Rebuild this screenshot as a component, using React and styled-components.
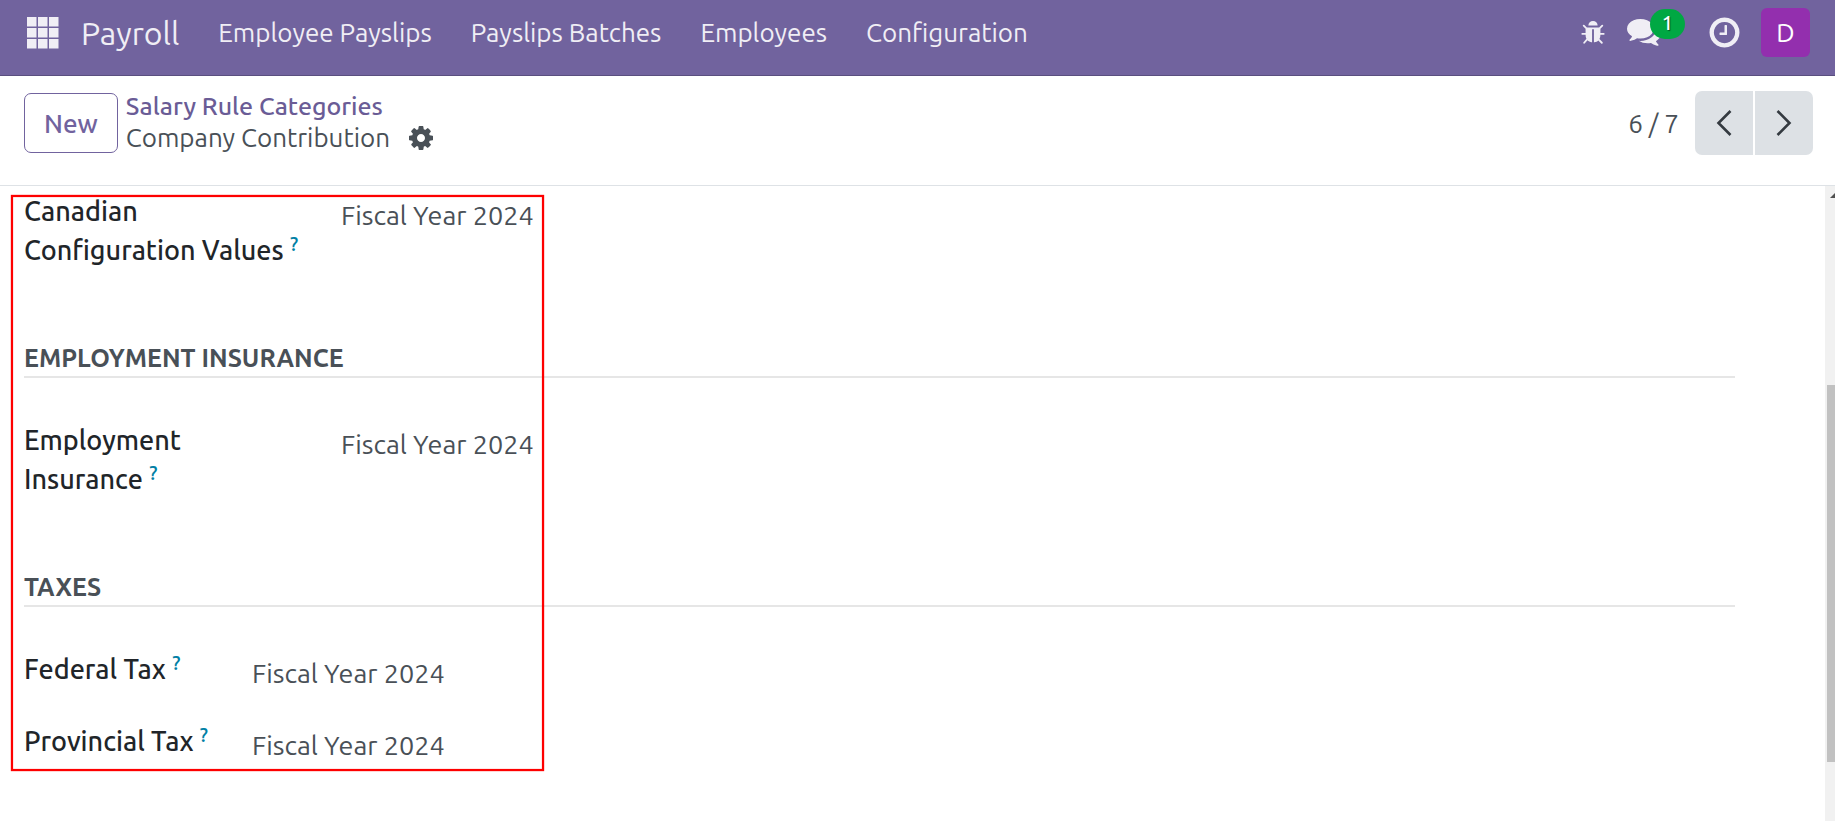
import React from 'react';
import styled, { createGlobalStyle } from 'styled-components';

const GlobalStyle = createGlobalStyle`
  *, *::before, *::after {
    box-sizing: border-box;
  }
  body {
    margin: 0;
    background: #fff;
    color: #495057;
    font-family: Ubuntu, 'Noto Sans', sans-serif;
    font-size: 26px;
  }
  button {
    font: inherit;
    cursor: pointer;
  }
`;

const Page = styled.div`
  display: flex;
  flex-direction: column;
  min-height: 100vh;
`;

const Navbar = styled.header`
  display: flex;
  align-items: center;
  justify-content: space-between;
  height: 76px;
  padding: 0 25px 10px 27px;
  background: #71639e;
  border-bottom: 1px solid #5a4f7f;
  color: #f0eef5;
`;

const NavMenu = styled.nav`
  display: flex;
  align-items: center;
  gap: 39px;
`;

const AppsButton = styled.button`
  display: flex;
  margin-right: -17px;
  padding: 0;
  border: 0;
  background: none;
  color: inherit;
`;

const Brand = styled.a`
  color: inherit;
  font-size: 32px;
  line-height: 40px;
  text-decoration: none;
`;

const NavLink = styled.a`
  color: inherit;
  line-height: 40px;
  text-decoration: none;
`;

const Systray = styled.div`
  display: flex;
  align-items: center;
`;

const SystrayButton = styled.button`
  position: relative;
  display: flex;
  margin-right: ${({ $gap }) => $gap}px;
  padding: 0;
  border: 0;
  background: none;
  color: inherit;
`;

const Badge = styled.span`
  position: absolute;
  top: -7px;
  left: 23px;
  width: 35px;
  padding-bottom: 2px;
  border-radius: 15px;
  background: #00a843;
  color: #fff;
  font-size: 20px;
  font-weight: 500;
  line-height: 28px;
  text-align: center;
  text-shadow: 1px 1px 1px rgba(0, 0, 0, 0.5);
`;

const Avatar = styled.button`
  width: 49px;
  height: 49px;
  padding: 0;
  border: 0;
  border-radius: 6px;
  background: #932fae;
  color: #fff;
`;

const ControlPanel = styled.div`
  display: flex;
  align-items: center;
  justify-content: space-between;
  padding: 15px 22px 30px 24px;
  border-bottom: 1px solid #dee2e6;
`;

const PanelSide = styled.div`
  display: flex;
  align-items: center;
  gap: ${({ $gap }) => $gap}px;
`;

const NewButton = styled.button`
  height: 60px;
  padding: 0 19px;
  border: 1px solid #71639e;
  border-radius: 7px;
  background: #fff;
  color: #71639e;
  font-weight: 500;
`;

const Breadcrumb = styled.div`
  display: flex;
  flex-direction: column;
`;

const ParentLink = styled.a`
  color: #6a5c96;
  font-size: 25px;
  font-weight: 500;
  line-height: 30px;
  text-decoration: none;
`;

const CurrentPage = styled.div`
  display: flex;
  align-items: center;
  gap: 19px;
  line-height: 34px;
`;

const CogButton = styled.button`
  display: flex;
  padding: 0;
  border: 0;
  background: none;
  color: #495057;
`;

const PagerButtons = styled.div`
  display: flex;
  gap: 2px;
`;

const PagerButton = styled.button`
  display: flex;
  align-items: center;
  justify-content: center;
  width: 58px;
  height: 64px;
  padding: 0;
  border: 0;
  border-radius: ${({ $side }) => ($side === 'left' ? '7px 0 0 7px' : '0 7px 7px 0')};
  background: #dde1e5;
  color: #343a40;
`;

const Content = styled.main`
  display: flex;
  flex: 1;
`;

const Sheet = styled.div`
  position: relative;
  flex: 1;
  padding: 6px 90px 46px 24px;
`;

const Highlight = styled.div`
  position: absolute;
  top: 9px;
  left: 11px;
  width: 533px;
  height: 576px;
  border: 2px solid #fe0000;
  box-shadow: 0 0 1px #fe0000, inset 0 0 1px #fe0000;
  pointer-events: none;
`;

const SectionTitle = styled.h2`
  margin: 70px 0 43px;
  border-bottom: 2px solid #e6e6e6;
  font-size: 25px;
  font-weight: 700;
  line-height: 36px;
  text-transform: uppercase;
`;

const FieldGroup = styled.dl`
  display: grid;
  grid-template-columns: ${({ $labelWidth }) => $labelWidth}px 1fr;
  row-gap: 33px;
  margin: 0;
  font-size: 27px;
  line-height: 39px;
`;

const FieldLabel = styled.dt`
  max-width: 280px;
  color: #212529;
  font-weight: 500;
`;

const Help = styled.sup`
  color: #0180a5;
  font-size: 20px;
  line-height: 20px;
  vertical-align: 9px;
`;

const FieldValue = styled.dd`
  height: 39px;
  margin: 0;
  padding-top: 4px;
`;

const Scrollbar = styled.div`
  display: grid;
  grid-template-rows: 199fr 377fr 59fr;
  width: 10px;
  padding-left: 2px;
  overflow: hidden;
  background: #f1f1f1;
`;

const ScrollThumb = styled.div`
  background: #c1c1c1;
`;

const AppsIcon = () => (
  <svg width="32" height="32" viewBox="0 0 32 32" fill="currentColor" aria-hidden="true">
    {[0, 11, 22].map((y) =>
      [0, 11, 22].map((x) => <rect key={`${x}-${y}`} x={x} y={y} width="9.5" height="9.5" />)
    )}
  </svg>
);

// Font Awesome 4 glyphs, 1792 units per em
const FaIcon = ({ size, rise = 0, d }) => (
  <svg width={size} height={size} viewBox={`0 ${rise} 1792 1792`} fill="currentColor" aria-hidden="true">
    <path d={d} />
  </svg>
);

const icons = {
  bug: 'M1696 960q0 26-19 45t-45 19h-224q0 171-67 290l208 209q19 19 19 45t-19 45q-18 19-45 19t-45-19l-198-197q-5 5-15 13t-42 28.5-65 36.5-82 29-97 13v-896h-128v896q-51 0-101.5-13.5t-87-33-66-39-43.5-32.5l-15-14-183 207q-20 21-48 21-24 0-43-16-19-18-20.5-44.5t15.5-46.5l202-227q-58-114-58-274h-224q-26 0-45-19t-19-45 19-45 45-19h224v-294l-173-173q-19-19-19-45t19-45 45-19 45 19l173 173h844l173-173q19-19 45-19t45 19 19 45-19 45l-173 173v294h224q26 0 45 19t19 45zm-480-576h-640q0-133 93.5-226.5t226.5-93.5 226.5 93.5 93.5 226.5z',
  comments:
    'M1408 768q0 139-94 257t-256.5 186.5-353.5 68.5q-86 0-176-16-124 88-278 128-36 9-86 16h-3q-11 0-20.5-8t-11.5-21q-1-3-1-6.5t.5-6.5 2-6l2.5-5 3.5-5.5 4-5 4.5-5 4-4.5q5-6 23-25t26-29.5 22.5-29 25-38.5 20.5-44q-124-72-195-177t-71-224q0-139 94-257t256.5-186.5 353.5-68.5 353.5 68.5 256.5 186.5 94 257zm384 256q0 120-71 224.5t-195 176.5q10 24 20.5 44t25 38.5 22.5 29 26 29.5 23 25q1 1 4 4.5t4.5 5 4 5 3.5 5.5l2.5 5 2 6 .5 6.5-1 6.5q-3 14-13 22t-22 7q-50-7-86-16-154-40-278-128-90 16-176 16-271 0-472-132 58 4 88 4 161 0 309-45t264-129q125-92 192-212t67-254q0-77-23-152 129 71 204 178t75 230z',
  clock:
    'M1024 544v448q0 14-9 23t-23 9h-320q-14 0-23-9t-9-23v-64q0-14 9-23t23-9h224v-352q0-14 9-23t23-9h64q14 0 23 9t9 23zm416 352q0-148-73-273t-198-198-273-73-273 73-198 198-73 273 73 273 198 198 273 73 273-73 198-198 73-273zm224 0q0 209-103 385.5t-279.5 279.5-385.5 103-385.5-103-279.5-279.5-103-385.5 103-385.5 279.5-279.5 385.5-103 385.5 103 279.5 279.5 103 385.5z',
  cog: 'M1024 896q0-106-75-181t-181-75-181 75-75 181 75 181 181 75 181-75 75-181zm512-109v222q0 12-8 23t-20 13l-185 28q-19 54-39 91 35 50 107 138 10 12 10 25t-9 23q-27 37-99 108t-94 71q-12 0-26-9l-138-108q-44 23-91 38-16 136-29 186-7 28-36 28h-222q-14 0-24.5-8.5t-11.5-21.5l-28-184q-49-16-90-37l-141 107q-10 9-25 9-14 0-25-11-126-114-165-168-7-10-7-23 0-12 8-23 15-21 51-66.5t54-70.5q-27-50-41-99l-183-27q-13-2-21-12.5t-8-23.5v-222q0-12 8-23t19-13l186-28q14-46 39-92-40-57-107-138-10-12-10-24 0-10 9-23 26-36 98.5-107.5t94.5-71.5q13 0 26 10l138 107q44-23 91-38 16-136 29-186 7-28 36-28h222q14 0 24.5 8.5t11.5 21.5l28 184q49 16 90 37l142-107q9-9 24-9 13 0 25 10 129 119 165 170 7 8 7 22 0 12-8 23-15 21-51 66.5t-54 70.5q26 50 41 98l183 28q13 2 21 12.5t8 23.5z',
};

const Chevron = ({ points }) => (
  <svg width="16" height="26" viewBox="0 0 16 26" fill="none" stroke="currentColor" strokeWidth="2.6" aria-hidden="true">
    <polyline points={points} />
  </svg>
);

const ScrollArrow = () => (
  <svg width="8" height="14" viewBox="0 0 8 14" fill="#505050" aria-hidden="true">
    <path d="M3 12 L8 7 V12 Z" />
  </svg>
);

const menuItems = ['Employee Payslips', 'Payslips Batches', 'Employees', 'Configuration'];

const Field = ({ label, value }) => (
  <>
    <FieldLabel>
      {label} <Help>?</Help>
    </FieldLabel>
    <FieldValue>{value}</FieldValue>
  </>
);

const App = () => {
  return (
    <Page>
      <GlobalStyle />
      <Navbar>
        <NavMenu>
          <AppsButton aria-label="Home menu">
            <AppsIcon />
          </AppsButton>
          <Brand href="#">Payroll</Brand>
          {menuItems.map((item) => (
            <NavLink key={item} href="#">{item}</NavLink>
          ))}
        </NavMenu>
        <Systray>
          <SystrayButton $gap={21} aria-label="Debug">
            <FaIcon size={26} d={icons.bug} />
          </SystrayButton>
          <SystrayButton $gap={46} aria-label="Messages">
            <FaIcon size={34} rise={96} d={icons.comments} />
            <Badge>1</Badge>
          </SystrayButton>
          <SystrayButton $gap={19} aria-label="Activities">
            <FaIcon size={35} d={icons.clock} />
          </SystrayButton>
          <Avatar aria-label="User menu">D</Avatar>
        </Systray>
      </Navbar>

      <ControlPanel>
        <PanelSide $gap={8}>
          <NewButton>New</NewButton>
          <Breadcrumb>
            <ParentLink href="#">Salary Rule Categories</ParentLink>
            <CurrentPage>
              Company Contribution
              <CogButton aria-label="Actions">
                <FaIcon size={28} d={icons.cog} />
              </CogButton>
            </CurrentPage>
          </Breadcrumb>
        </PanelSide>
        <PanelSide $gap={16}>
          <span>6 / 7</span>
          <PagerButtons>
            <PagerButton $side="left" aria-label="Previous">
              <Chevron points="14.5,1 2.5,13 14.5,25" />
            </PagerButton>
            <PagerButton $side="right" aria-label="Next">
              <Chevron points="1.5,1 13.5,13 1.5,25" />
            </PagerButton>
          </PagerButtons>
        </PanelSide>
      </ControlPanel>

      <Content>
        <Sheet>
          <FieldGroup $labelWidth={317}>
            <Field label="Canadian Configuration Values" value="Fiscal Year 2024" />
          </FieldGroup>
          <SectionTitle>Employment Insurance</SectionTitle>
          <FieldGroup $labelWidth={317}>
            <Field label="Employment Insurance" value="Fiscal Year 2024" />
          </FieldGroup>
          <SectionTitle>Taxes</SectionTitle>
          <FieldGroup $labelWidth={228}>
            <Field label="Federal Tax" value="Fiscal Year 2024" />
            <Field label="Provincial Tax" value="Fiscal Year 2024" />
          </FieldGroup>
          <Highlight />
        </Sheet>
        <Scrollbar aria-hidden="true">
          <ScrollArrow />
          <ScrollThumb />
        </Scrollbar>
      </Content>
    </Page>
  );
};

export default App;
